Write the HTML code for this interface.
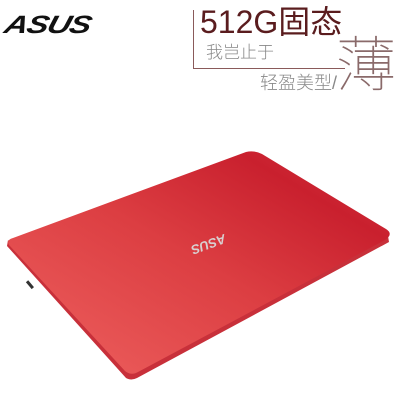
<!DOCTYPE html>
<html><head><meta charset="utf-8"><style>
body{margin:0;width:400px;height:400px;background:#fff;position:relative;overflow:hidden;font-family:"Liberation Sans","Noto Sans CJK SC",sans-serif}
.a{position:absolute;white-space:nowrap}
</style></head><body>
<div class="a" style="left:9px;top:11px;font:italic 900 25px 'Liberation Sans',sans-serif;color:#111;transform:scaleX(1.3) skewX(-12deg);transform-origin:left top;letter-spacing:-1px">ASUS</div>
<div class="a" style="left:193px;top:10px;width:0;height:58px;border-left:1px solid #8a5a5a"></div>
<div class="a" style="left:193px;top:68px;width:152px;height:0;border-top:1px solid #8a5a5a"></div>
<div class="a" style="left:200px;top:4px;font-size:32px;color:#5a1c1e;line-height:36px">512G固态</div>
<div class="a" style="left:206px;top:42px;font-size:17px;color:#888;line-height:22px;font-weight:300">我岂止于</div>
<div class="a" style="left:260px;top:72px;font-size:18px;color:#888;line-height:22px;font-weight:300">轻盈美型/</div>
<div class="a" style="left:336px;top:28px;font-size:60px;color:#8a6a6a;line-height:66px;font-weight:100;font-family:'Noto Sans CJK SC',sans-serif">薄</div>
<svg class="a" style="left:0;top:0" width="400" height="400">
<defs>
<linearGradient id="g" x1="0" y1="1" x2="1" y2="0">
<stop offset="0" stop-color="#ee6260"/><stop offset="0.5" stop-color="#dc3e42"/><stop offset="0.8" stop-color="#c9202e"/><stop offset="1" stop-color="#d63845"/>
</linearGradient>
</defs>
<path d="M7 246 L126 378 Q131 381 137 378 L389 242 L388 236 L130 372 L8 240 Z" fill="#c8303a"/>
<path d="M13 238 Q6 240 9 245 L125 371 Q131 376 138 372 L385 240 Q394 234 386 229 L262 154 Q254 150 246 152 Z" fill="url(#g)"/>
<rect x="28" y="280" width="3" height="9" fill="#333" transform="rotate(-40 30 284)"/>
<text x="0" y="0" font-family="Liberation Sans" font-style="italic" font-weight="bold" font-size="13" fill="#d8d0d0" transform="translate(224,234) rotate(160)">ASUS</text>
</svg>
</body></html>
